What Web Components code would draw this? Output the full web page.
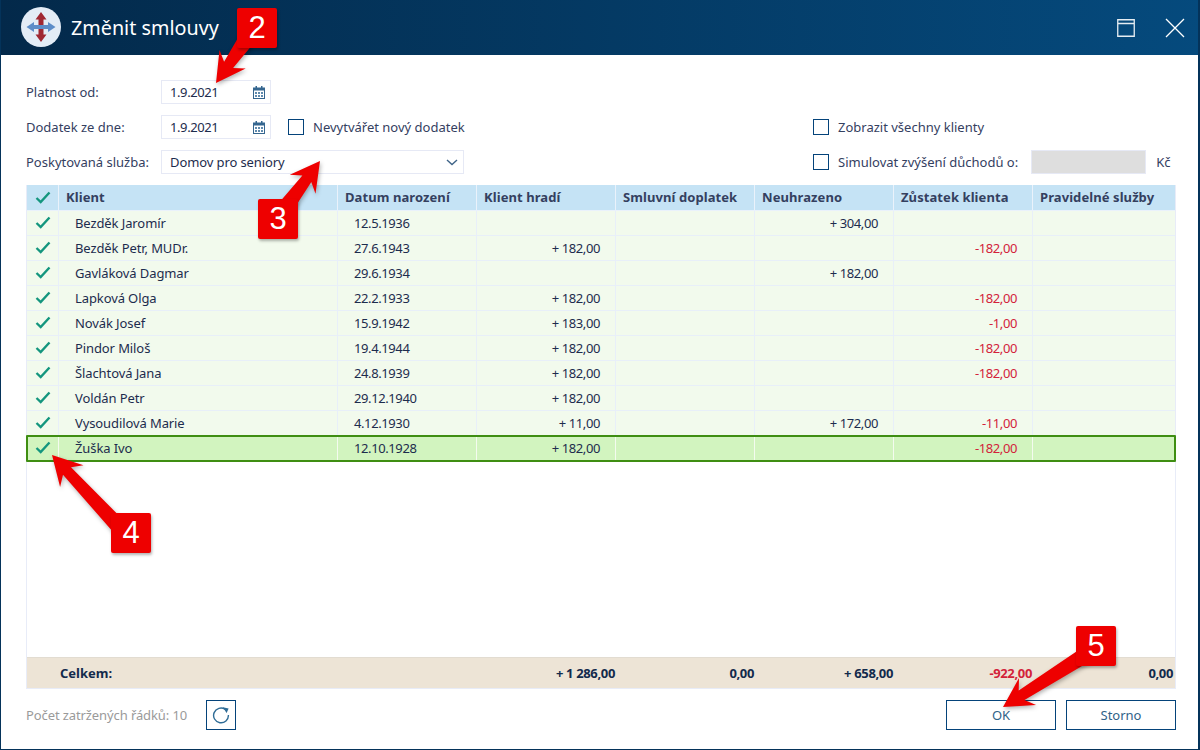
<!DOCTYPE html>
<html lang="cs">
<head>
<meta charset="utf-8">
<title>Změnit smlouvy</title>
<style>
  html, body { margin: 0; padding: 0; background: #fff; }
  body { font-family: "Noto Sans", "Open Sans", sans-serif; font-size: 13px; color: #1d2c4d; }
</style>
</head>
<body>
<app-dialog heading="Změnit smlouvy">
  <contract-form></contract-form>
  <client-grid>
    <client-row name="Bezděk Jaromír" born="12.5.1936" unpaid="+ 304,00"></client-row>
    <client-row name="Bezděk Petr, MUDr." born="27.6.1943" pays="+ 182,00" balance="-182,00"></client-row>
    <client-row name="Gavláková Dagmar" born="29.6.1934" unpaid="+ 182,00"></client-row>
    <client-row name="Lapková Olga" born="22.2.1933" pays="+ 182,00" balance="-182,00"></client-row>
    <client-row name="Novák Josef" born="15.9.1942" pays="+ 183,00" balance="-1,00"></client-row>
    <client-row name="Pindor Miloš" born="19.4.1944" pays="+ 182,00" balance="-182,00"></client-row>
    <client-row name="Šlachtová Jana" born="24.8.1939" pays="+ 182,00" balance="-182,00"></client-row>
    <client-row name="Voldán Petr" born="29.12.1940" pays="+ 182,00"></client-row>
    <client-row name="Vysoudilová Marie" born="4.12.1930" pays="+ 11,00" unpaid="+ 172,00" balance="-11,00"></client-row>
    <client-row name="Žuška Ivo" born="12.10.1928" pays="+ 182,00" balance="-182,00" selected></client-row>
  </client-grid>
  <dialog-actions></dialog-actions>
</app-dialog>
<step-callout n="2" x="237" y="8" tipx="216" tipy="83" fromx="246" fromy="40"></step-callout>
<step-callout n="3" x="258" y="199" tipx="320" tipy="161" fromx="285" fromy="208"></step-callout>
<step-callout n="4" x="111" y="513" tipx="52" tipy="455" fromx="122" fromy="530"></step-callout>
<step-callout n="5" x="1076" y="626" tipx="1003" tipy="707" fromx="1090" fromy="652"></step-callout>

<script>
// sloupce tabulky, sdilene mezi hlavickou, radky a souctem
const COLS = '32px 279px 139px 139px 139px 139px 139px 1fr';

const CHECK = `<svg width="16" height="13" viewBox="0 0 16 13"><path d="M1.5 7 L5.7 11 L14.5 1.5" fill="none" stroke="#14967e" stroke-width="2.4"/></svg>`;

class AppDialog extends HTMLElement {
  constructor() {
    super();
    this.attachShadow({ mode: 'open' });
  }
  connectedCallback() {
    this.shadowRoot.innerHTML = `<style>
      :host { display: flex; flex-direction: column; width: 1200px; height: 750px; box-sizing: border-box; border: 1px solid #04335a; border-top: 0; border-right-width: 2px; background: #fff; overflow: hidden; }
      header { flex: none; height: 55px; margin: 0 -2px 0 -1px; display: flex; align-items: center; padding: 0 15px 0 21px; background: linear-gradient(90deg, #03294a, #054a7d); color: #fff; }
      .logo { width: 40px; height: 40px; margin-top: -1px; flex: none; }
      h1 { margin: 0 0 0 10px; font-size: 19.75px; font-weight: 400; flex: 1; }
      .tools { display: flex; align-items: center; gap: 30px; }
      main { flex: 1; min-height: 0; display: flex; flex-direction: column; padding: 25px 23px 19px 25px; }
    </style>
    <header>
      <svg class="logo" viewBox="0 0 40 40">
        <circle cx="20" cy="20" r="20" fill="#e3ecf6"/>
        <path d="M20 5 L25.5 12.5 H22.5 V27.5 H25.5 L20 35 L14.5 27.5 H17.5 V12.5 H14.5 Z" fill="#a02833"/>
        <path d="M5.5 20 L13 15 V18 H27 V15 L34.5 20 L27 25 V22 H13 V25 Z" fill="#5d8dc8"/>
      </svg>
      <h1>${this.getAttribute('heading')}</h1>
      <div class="tools">
        <svg width="18" height="18" viewBox="0 0 18 18"><path d="M.75.75 H17.25 V17.25 H.75 Z M.75 4.5 H17.25" fill="none" stroke="#fff" stroke-width="1.3" opacity=".9"/></svg>
        <svg width="20" height="20" viewBox="0 0 20 20"><path d="M1 1 L19 19 M19 1 L1 19" fill="none" stroke="#fff" stroke-width="1.3"/></svg>
      </div>
    </header>
    <main><slot></slot></main>`;
  }
}

class DateInput extends HTMLElement {
  constructor() {
    super();
    this.attachShadow({ mode: 'open' });
  }
  connectedCallback() {
    this.shadowRoot.innerHTML = `<style>
      :host { display: flex; align-items: center; justify-content: space-between; box-sizing: border-box; width: 110px; height: 24px; padding: 0 5px 0 8px; border: 1px solid #e6e9f5; color: #1d2c4d; }
      span { letter-spacing: -.4px; }
      svg { display: block; }
    </style>
    <span><slot></slot></span>
    <svg width="12" height="13" viewBox="0 0 12 13">
      <path d="M2.5 0 h1.5 v2 h-1.5 z M8 0 h1.5 v2 h-1.5 z" fill="#35668f"/>
      <path d="M0 1.5 h12 v11.5 h-12 z M1 4.5 v7.5 h10 v-7.5 z" fill="#35668f"/>
      <path d="M2 6 h2 v2 h-2 z M5 6 h2 v2 h-2 z M8 6 h2 v2 h-2 z M2 9 h2 v2 h-2 z M5 9 h2 v2 h-2 z M8 9 h2 v2 h-2 z" fill="#5f8aad"/>
    </svg>`;
  }
}

class CheckField extends HTMLElement {
  constructor() {
    super();
    this.attachShadow({ mode: 'open' });
  }
  connectedCallback() {
    this.shadowRoot.innerHTML = `<style>
      :host { display: inline-flex; align-items: center; gap: 9px; color: #34405f; white-space: nowrap; }
      i { display: block; box-sizing: border-box; width: 16px; height: 16px; border: 1px solid #04437a; background: #fff; }
    </style><i></i><span><slot></slot></span>`;
  }
}

class ContractForm extends HTMLElement {
  constructor() {
    super();
    this.attachShadow({ mode: 'open' });
  }
  connectedCallback() {
    this.shadowRoot.innerHTML = `<style>
      :host { display: grid; grid-template-columns: 135px 303px 349px 1fr; grid-auto-rows: 24px; row-gap: 11px; align-items: center; margin-bottom: 11px; color: #34405f; }
      .pair { display: flex; align-items: center; gap: 17px; grid-column: 2 / 4; }
      .select { display: flex; align-items: center; justify-content: space-between; box-sizing: border-box; height: 24px; padding: 0 5px 0 8px; border: 1px solid #e6e9f5; color: #1d2c4d; letter-spacing: -.1px; }
      .sim { display: flex; align-items: center; white-space: nowrap; }
      .sim b { display: block; box-sizing: border-box; width: 115px; height: 24px; margin: 0 10px 0 13px; background: #dedede; border: 1px solid #e6e9f5; }
      .sp { grid-column: 3; }
    </style>
    <span>Platnost od:</span>
    <div class="pair" style="grid-column:2 / 5"><date-input>1.9.2021</date-input></div>
    <span>Dodatek ze dne:</span>
    <div class="pair"><date-input>1.9.2021</date-input><check-field>Nevytvářet nový dodatek</check-field></div>
    <check-field>Zobrazit všechny klienty</check-field>
    <span>Poskytovaná služba:</span>
    <div class="select"><span>Domov pro seniory</span>
      <svg width="12" height="7" viewBox="0 0 12 7"><path d="M1 1 L6 5.5 L11 1" fill="none" stroke="#3f6488" stroke-width="1.4"/></svg>
    </div>
    <span class="sp"></span>
    <div class="sim"><check-field>Simulovat zvýšení důchodů o:</check-field><b></b><span>Kč</span></div>`;
  }
}

class ClientGrid extends HTMLElement {
  constructor() {
    super();
    this.attachShadow({ mode: 'open' });
  }
  connectedCallback() {
    const heads = ['Klient', 'Datum narození', 'Klient hradí', 'Smluvní doplatek', 'Neuhrazeno', 'Zůstatek klienta', 'Pravidelné služby'];
    this.shadowRoot.innerHTML = `<style>
      :host { flex: 1; min-height: 0; display: flex; flex-direction: column; box-sizing: border-box; border: 1px solid #e8ecf8; border-top: 0; width: 1150px; }
      .head, .sum { display: grid; grid-template-columns: ${COLS}; flex: none; }
      .head { height: 26px; background: #c5e3f5; }
      .head div { display: flex; align-items: center; padding: 0 0 1px 7px; font-weight: 700; color: #34405f; letter-spacing: .08px; border-right: 1px solid #eaf2fb; border-bottom: 1px solid #eaf2fb; }
      .head div:first-child { padding-left: 8px; }
      .head div:last-child { border-right: 0; }
      .rows { flex: 1; min-height: 0; }
      .sum { height: 31px; align-items: center; background: #ede4d6; border-top: 1px solid #e2dcd1; box-sizing: border-box; font-weight: 700; color: #122a4c; }
      .sum span { text-align: right; padding-right: 1px; letter-spacing: -.35px; }
      .sum .lbl { grid-column: 1 / 3; text-align: left; padding-left: 33px; letter-spacing: 0; }
      .sum .neg { color: #d3223a; }
      .sum .last { padding-right: 2px; }
    </style>
    <div class="head"><div>${CHECK}</div>${heads.map(h => `<div>${h}</div>`).join('')}</div>
    <div class="rows"><slot></slot></div>
    <div class="sum">
      <span class="lbl">Celkem:</span><span></span>
      <span>+ 1 286,00</span><span>0,00</span><span>+ 658,00</span><span class="neg">-922,00</span><span class="last">0,00</span>
    </div>`;
  }
}

class ClientRow extends HTMLElement {
  constructor() {
    super();
    this.attachShadow({ mode: 'open' });
  }
  connectedCallback() {
    const a = n => this.getAttribute(n) || '';
    this.shadowRoot.innerHTML = `<style>
      :host { display: grid; grid-template-columns: ${COLS}; box-sizing: border-box; height: 25px; background: #f2faed; color: #1d2c4d; border-bottom: 1px solid #e8eff9; }
      :host([selected]) { grid-template-columns: 31px 279px 139px 139px 139px 139px 139px 1fr; background: #d2f4bf; border: 2px solid #3f8e12; height: 27px; margin: -1px -1px 0; border-radius: 1px; }
      div { display: flex; align-items: center; padding: 0 15px 1px 16px; border-right: 1px solid #e8eff9; white-space: nowrap; letter-spacing: -.4px; }
      :host([selected]) div { border-right-color: #f4fbef; padding-bottom: 2px; }
      div.tick { padding: 0 0 1px 8px; }
      div.name { letter-spacing: -.1px; }
      :host([selected]) div.tick { padding-left: 7px; }
      div:last-child { border-right: 0; }
      .r { justify-content: flex-end; }
      .neg { color: #d3223a; }
    </style>
    <div class="tick">${CHECK}</div><div class="name">${a('name')}</div><div>${a('born')}</div>
    <div class="r">${a('pays')}</div><div class="r"></div>
    <div class="r">${a('unpaid')}</div><div class="r neg">${a('balance')}</div><div></div>`;
  }
}

class DialogActions extends HTMLElement {
  constructor() {
    super();
    this.attachShadow({ mode: 'open' });
  }
  connectedCallback() {
    this.shadowRoot.innerHTML = `<style>
      :host { display: flex; align-items: center; flex: none; height: 30px; margin-top: 11px; color: #9a9a9a; width: 1150px; }
      span.count { letter-spacing: -.1px; }
      .btn { display: flex; align-items: center; justify-content: center; box-sizing: border-box; height: 30px; width: 110px; border: 1px solid #04437a; color: #2f6288; background: #fff; }
      .refresh { width: 30px; margin-left: 19px; }
      .sp { flex: 1; }
      .ok { margin-right: 10px; }
    </style>
    <span class="count">Počet zatržených řádků: 10</span>
    <div class="btn refresh">
      <svg width="18" height="18" viewBox="0 0 18 18">
        <path d="M13.2 3.3 A7.4 7.4 0 1 0 16.4 9" fill="none" stroke="#2f6c96" stroke-width="1.4"/>
        <path d="M10.8 1.2 L16.6 2.4 L14.6 7 Z" fill="#2f6c96"/>
      </svg>
    </div>
    <span class="sp"></span>
    <div class="btn ok">OK</div><div class="btn">Storno</div>`;
  }
}

// cislovany stitek se sipkou, lezi pres obsah dialogu
class StepCallout extends HTMLElement {
  constructor() {
    super();
    this.attachShadow({ mode: 'open' });
  }
  connectedCallback() {
    const v = n => Number(this.getAttribute(n));
    const tx = v('tipx'), ty = v('tipy'), fx = v('fromx'), fy = v('fromy');
    const len = Math.hypot(fx - tx, fy - ty);
    const dx = (fx - tx) / len, dy = (fy - ty) / len;
    const nx = -dy, ny = dx;
    const pt = (along, side) => `${(tx + dx * along + nx * side).toFixed(1)},${(ty + dy * along + ny * side).toFixed(1)}`;
    const points = [
      pt(0, 0), pt(29, 16), pt(22, 5.5), pt(len, 8),
      pt(len, -8), pt(22, -5.5), pt(29, -16)
    ].join(' ');
    this.shadowRoot.innerHTML = `<style>
      :host { position: absolute; left: 0; top: 0; width: 0; height: 0; }
      svg { position: absolute; left: 0; top: 0; overflow: visible; filter: drop-shadow(1px 2px 2px rgba(0,0,0,.3)); }
      .badge { position: absolute; left: ${v('x')}px; top: ${v('y')}px; width: 40px; height: 40px; display: flex; align-items: center; justify-content: center; background: #ee0000; border-radius: 2px; color: #fff; font: 31px "Liberation Sans", Arial, sans-serif; box-shadow: 1px 2px 3px rgba(0,0,0,.3); }
    </style>
    <svg width="1200" height="750"><polygon points="${points}" fill="#ee0000"/></svg>
    <div class="badge">${this.getAttribute('n')}</div>`;
  }
}

customElements.define('app-dialog', AppDialog);
customElements.define('date-input', DateInput);
customElements.define('check-field', CheckField);
customElements.define('contract-form', ContractForm);
customElements.define('client-grid', ClientGrid);
customElements.define('client-row', ClientRow);
customElements.define('dialog-actions', DialogActions);
customElements.define('step-callout', StepCallout);
</script>
</body>
</html>
